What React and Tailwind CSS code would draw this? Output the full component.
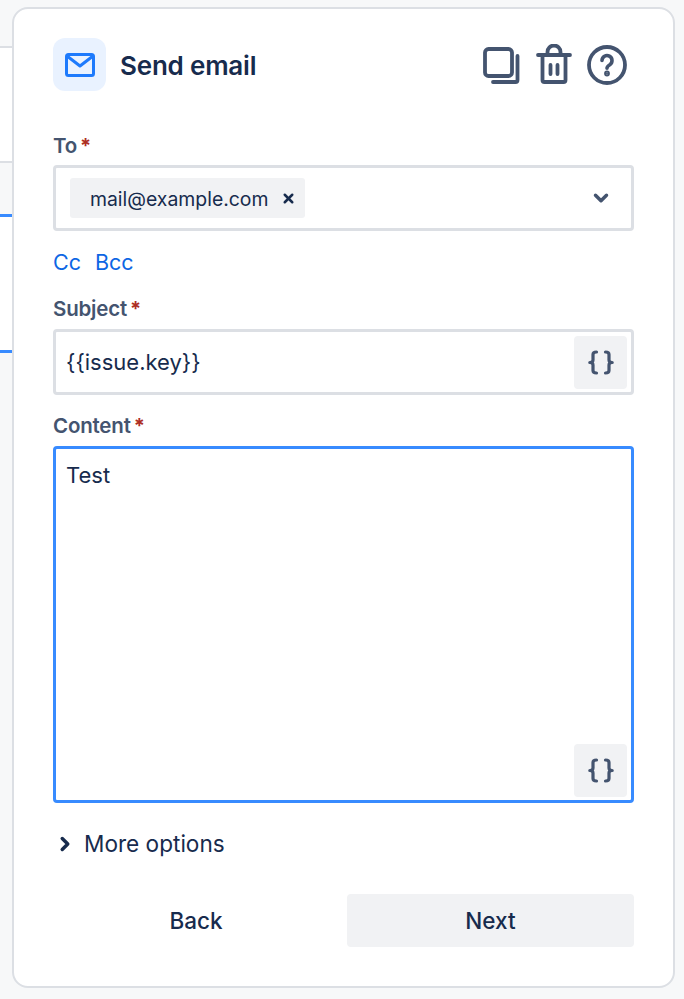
import { ChevronDown, ChevronRight, X } from 'lucide-react';

const SANS = 'font-["Inter","Liberation_Sans",sans-serif]';

function Label({ children }) {
  return (
    <div className="flex h-[20px] items-center leading-[20px]">
      <span className="text-[20.5px] font-semibold tracking-[-0.2px] text-[#44546f]">{children}</span>
      <span className="ml-[3px] text-[20px] font-bold text-[#ae2e24]">*</span>
    </div>
  );
}

function SmartButton() {
  return (
    <button className="flex h-[53px] w-[53px] items-center justify-center rounded-[4px] bg-[#f1f2f4]">
      <svg width="26" height="25" viewBox="0 0 26 25" fill="none" stroke="#44546f" strokeWidth="3.2" strokeLinecap="round" strokeLinejoin="round">
        <path d="M8.500 2c-2.200 0-3.500.8-3.500 2.500v5.500c0 1.700-1 2.500-3.200 2.500 2.200 0 3.200.8 3.200 2.500v5.500c0 1.700 1.300 2.500 3.500 2.500" />
        <path d="M17.500 2c2.200 0 3.500.8 3.500 2.500v5.500c0 1.700 1 2.500 3.200 2.500-2.200 0-3.200.8-3.200 2.500v5.500c0 1.700-1.300 2.500-3.500 2.500" />
      </svg>
    </button>
  );
}

export default function App() {
  return (
    <div className={`relative h-[999px] w-[684px] overflow-hidden bg-[#f7f8f9] ${SANS}`}>
      {/* bits of the canvas peeking out left of the panel */}
      <div className="absolute left-0 top-[46px] h-[117px] w-[12px] border-y-2 border-[#dcdfe4] bg-white" />
      <div className="absolute left-0 top-[214px] h-[139px] w-[12px] border-y-[3px] border-[#388bff] bg-white" />

      <div className="absolute left-[12px] top-[7px] flex h-[981px] w-[663px] flex-col rounded-[16px] border-2 border-[#dcdfe4] bg-white px-[39px]">
        {/* Header */}
        <div className="mt-[29px] flex h-[53px] items-center">
          <div className="flex h-[53px] w-[53px] items-center justify-center rounded-[12px] bg-[#e9f2ff]">
            <svg width="30" height="24" viewBox="0 0 30 24" fill="none" stroke="#1d7afc" strokeWidth="3" strokeLinejoin="round">
              <rect x="1.500" y="1.500" width="27" height="21" rx="2" />
              <path d="M2 3l13 10L28 3" />
            </svg>
          </div>
          <h1 className="ml-[14px] pt-[2px] text-[26px] font-semibold tracking-[-0.2px] text-[#172b4d]">Send email</h1>
          <div className="ml-auto flex items-center">
            <svg width="37" height="37" viewBox="0 0 37 37" fill="none" stroke="#44546f" strokeWidth="3.800" strokeLinecap="round" strokeLinejoin="round" className="mr-[16px] mt-[2px]">
              <rect x="2" y="2" width="27" height="27" rx="3.500" />
              <path d="M34.500 9v24a2 2 0 0 1-2 2H10" />
            </svg>
            <svg width="36" height="40" viewBox="0 0 36 40" fill="none" stroke="#44546f" strokeWidth="3.800" strokeLinecap="round" strokeLinejoin="round" className="mr-[15px] -mt-[2px]">
              <path d="M2 11h32" />
              <path d="M11.500 10V8a6.500 6.500 0 0 1 13 0v2" />
              <path d="M6.500 11v25a2 2 0 0 0 2 2h19a2 2 0 0 0 2-2V11" />
              <path d="M14.500 21v9M21.500 21v9" />
            </svg>
            <svg width="40" height="40" viewBox="0 0 40 40" fill="none" stroke="#44546f" strokeWidth="3.800" strokeLinecap="round" strokeLinejoin="round" className="mr-[7px]">
              <circle cx="20" cy="20" r="18" />
              <path d="M15 15.500a5 5 0 1 1 7.800 4.200c-1.800 1.100-2.800 1.800-2.800 3.600" strokeWidth="3.600" />
              <circle cx="20" cy="28.500" r="1" fill="#44546f" />
            </svg>
          </div>
        </div>

        {/* To */}
        <div className="mt-[45px]"><Label>To</Label></div>
        <div className="mt-[9px] flex h-[66px] items-center rounded-[4px] border-[3px] border-[#dcdfe4] bg-white pl-[14px] pr-[19px]">
          <div className="flex h-[40px] items-center rounded-[3px] bg-[#f1f2f4] pl-[20px] pr-[9px]">
            <span className="pt-[3px] text-[19.4px] text-[#172b4d]">mail@example.com</span>
            <X size={15} strokeWidth={4} className="ml-[13px] text-[#172b4d]" />
          </div>
          <ChevronDown size={22} strokeWidth={3.800} className="ml-auto text-[#44546f]" />
        </div>

        <div className="mt-[17px] flex h-[28px] items-center gap-[14px] text-[21.5px] text-[#0c66e4]">
          <span>Cc</span>
          <span>Bcc</span>
        </div>

        {/* Subject */}
        <div className="mt-[23px]"><Label>Subject</Label></div>
        <div className="mt-[10px] flex h-[66px] items-center rounded-[4px] border-[3px] border-[#dcdfe4] bg-white pl-[10px] pr-[4px]">
          <span className="text-[22px] text-[#172b4d]">{'{{issue.key}}'}</span>
          <div className="ml-auto"><SmartButton /></div>
        </div>

        {/* Content */}
        <div className="mt-[21px]"><Label>Content</Label></div>
        <div className="mt-[10px] flex h-[357px] flex-col rounded-[4px] border-[3px] border-[#388bff] bg-white pb-[3px] pl-[10px] pr-[4px] pt-[12px]">
          <span className="text-[22px] leading-[28px] text-[#172b4d]">Test</span>
          <div className="ml-auto mt-auto"><SmartButton /></div>
        </div>

        <div className="mt-[27px] flex h-[28px] items-center text-[22.6px] text-[#172b4d]">
          <ChevronRight size={22} strokeWidth={3.800} className="ml-[1px] mr-[8px]" />
          <span>More options</span>
        </div>

        {/* Footer */}
        <div className="mt-[36px] flex h-[53px] items-center">
          <button className="h-[53px] w-[286px] text-[22.5px] font-medium text-[#172b4d]">Back</button>
          <button className="ml-[8px] h-[53px] flex-1 rounded-[4px] bg-[#f1f2f4] text-[22.5px] font-medium text-[#172b4d]">Next</button>
        </div>
      </div>
    </div>
  );
}
